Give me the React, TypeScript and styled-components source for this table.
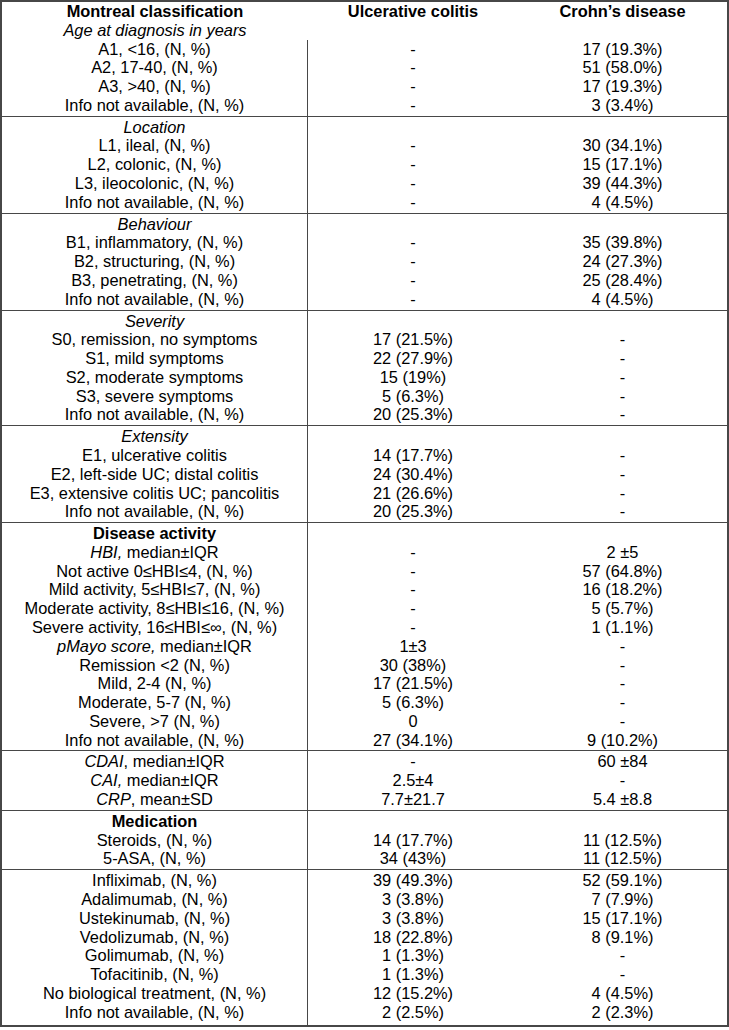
import React from "react";
import styled, { createGlobalStyle } from "styled-components";

const GlobalStyle = createGlobalStyle`
  html, body { margin: 0; padding: 0; background: #ffffff; }
  body { font-family: "Liberation Sans", Arial, sans-serif; color: #000; }
`;

const Table = styled.div`
  width: 729px;
  box-sizing: border-box;
  border: 2px solid #474747;
  background: #fff;
  font-size: 16.4px;
  line-height: 18.78px;
`;

const Section = styled.div<{ $first?: boolean; $last?: boolean }>`
  display: flex;
  flex-direction: column;
  border-top: ${(p) => (p.$first ? "none" : "1px solid #474747")};
  & > *:first-child > * { padding-top: ${(p) => (p.$first ? "0" : "1px")}; }
  & > *:last-child > * { padding-bottom: ${(p) => (p.$last ? "4px" : "1px")}; }
`;

const Row = styled.div`
  display: grid;
  grid-template-columns: 306px 210px 1fr;
`;

const Cell = styled.div<{ $divided?: boolean }>`
  box-sizing: border-box;
  text-align: center;
  white-space: nowrap;
  border-right: ${(p) => (p.$divided ? "1px solid #474747" : "none")};
`;

const Bold = styled.b`
  font-weight: 700;
`;

const Em = styled.i`
  font-style: italic;
`;

type RowData = {
  label: React.ReactNode;
  uc?: React.ReactNode;
  cd?: React.ReactNode;
  open?: boolean;
};

const info = "Info not available, (N, %)";

const sections: RowData[][] = [
  [
    {
      label: <Bold>Montreal classification</Bold>,
      uc: <Bold>Ulcerative colitis</Bold>,
      cd: <Bold>Crohn’s disease</Bold>,
      open: true,
    },
    { label: <Em>Age at diagnosis in years</Em>, open: true },
    { label: "A1, <16, (N, %)", uc: "-", cd: "17 (19.3%)" },
    { label: "A2, 17-40, (N, %)", uc: "-", cd: "51 (58.0%)" },
    { label: "A3, >40, (N, %)", uc: "-", cd: "17 (19.3%)" },
    { label: info, uc: "-", cd: "3 (3.4%)" },
  ],
  [
    { label: <Em>Location</Em> },
    { label: "L1, ileal, (N, %)", uc: "-", cd: "30 (34.1%)" },
    { label: "L2, colonic, (N, %)", uc: "-", cd: "15 (17.1%)" },
    { label: "L3, ileocolonic, (N, %)", uc: "-", cd: "39 (44.3%)" },
    { label: info, uc: "-", cd: "4 (4.5%)" },
  ],
  [
    { label: <Em>Behaviour</Em> },
    { label: "B1, inflammatory, (N, %)", uc: "-", cd: "35 (39.8%)" },
    { label: "B2, structuring, (N, %)", uc: "-", cd: "24 (27.3%)" },
    { label: "B3, penetrating, (N, %)", uc: "-", cd: "25 (28.4%)" },
    { label: info, uc: "-", cd: "4 (4.5%)" },
  ],
  [
    { label: <Em>Severity</Em> },
    { label: "S0, remission, no symptoms", uc: "17 (21.5%)", cd: "-" },
    { label: "S1, mild symptoms", uc: "22 (27.9%)", cd: "-" },
    { label: "S2, moderate symptoms", uc: "15 (19%)", cd: "-" },
    { label: "S3, severe symptoms", uc: "5 (6.3%)", cd: "-" },
    { label: info, uc: "20 (25.3%)", cd: "-" },
  ],
  [
    { label: <Em>Extensity</Em> },
    { label: "E1, ulcerative colitis", uc: "14 (17.7%)", cd: "-" },
    { label: "E2, left-side UC; distal colitis", uc: "24 (30.4%)", cd: "-" },
    { label: "E3, extensive colitis UC; pancolitis", uc: "21 (26.6%)", cd: "-" },
    { label: info, uc: "20 (25.3%)", cd: "-" },
  ],
  [
    { label: <Bold>Disease activity</Bold> },
    { label: <><Em>HBI,</Em> median±IQR</>, uc: "-", cd: "2 ±5" },
    { label: "Not active 0≤HBI≤4, (N, %)", uc: "-", cd: "57 (64.8%)" },
    { label: "Mild activity, 5≤HBI≤7, (N, %)", uc: "-", cd: "16 (18.2%)" },
    { label: "Moderate activity, 8≤HBI≤16, (N, %)", uc: "-", cd: "5 (5.7%)" },
    { label: "Severe activity, 16≤HBI≤∞, (N, %)", uc: "-", cd: "1 (1.1%)" },
    { label: <><Em>pMayo score,</Em> median±IQR</>, uc: "1±3", cd: "-" },
    { label: "Remission <2 (N, %)", uc: "30 (38%)", cd: "-" },
    { label: "Mild, 2-4 (N, %)", uc: "17 (21.5%)", cd: "-" },
    { label: "Moderate, 5-7 (N, %)", uc: "5 (6.3%)", cd: "-" },
    { label: "Severe, >7 (N, %)", uc: "0", cd: "-" },
    { label: info, uc: "27 (34.1%)", cd: "9 (10.2%)" },
  ],
  [
    { label: <><Em>CDAI</Em>, median±IQR</>, uc: "-", cd: "60 ±84" },
    { label: <><Em>CAI,</Em> median±IQR</>, uc: "2.5±4", cd: "-" },
    { label: <><Em>CRP</Em>, mean±SD</>, uc: "7.7±21.7", cd: "5.4 ±8.8" },
  ],
  [
    { label: <Bold>Medication</Bold> },
    { label: "Steroids, (N, %)", uc: "14 (17.7%)", cd: "11 (12.5%)" },
    { label: "5-ASA, (N, %)", uc: "34 (43%)", cd: "11 (12.5%)" },
  ],
  [
    { label: "Infliximab, (N, %)", uc: "39 (49.3%)", cd: "52 (59.1%)" },
    { label: "Adalimumab, (N, %)", uc: "3 (3.8%)", cd: "7 (7.9%)" },
    { label: "Ustekinumab, (N, %)", uc: "3 (3.8%)", cd: "15 (17.1%)" },
    { label: "Vedolizumab, (N, %)", uc: "18 (22.8%)", cd: "8 (9.1%)" },
    { label: "Golimumab, (N, %)", uc: "1 (1.3%)", cd: "-" },
    { label: "Tofacitinib, (N, %)", uc: "1 (1.3%)", cd: "-" },
    { label: "No biological treatment, (N, %)", uc: "12 (15.2%)", cd: "4 (4.5%)" },
    { label: info, uc: "2 (2.5%)", cd: "2 (2.3%)" },
  ],
];

export default function App() {
  return (
    <>
      <GlobalStyle />
      <Table>
        {sections.map((rows, si) => (
          <Section key={si} $first={si === 0} $last={si === sections.length - 1}>
            {rows.map((r, ri) => (
              <Row key={ri}>
                <Cell $divided={!r.open}>{r.label}</Cell>
                <Cell>{r.uc ?? "\u00a0"}</Cell>
                <Cell>{r.cd ?? "\u00a0"}</Cell>
              </Row>
            ))}
          </Section>
        ))}
      </Table>
    </>
  );
}
